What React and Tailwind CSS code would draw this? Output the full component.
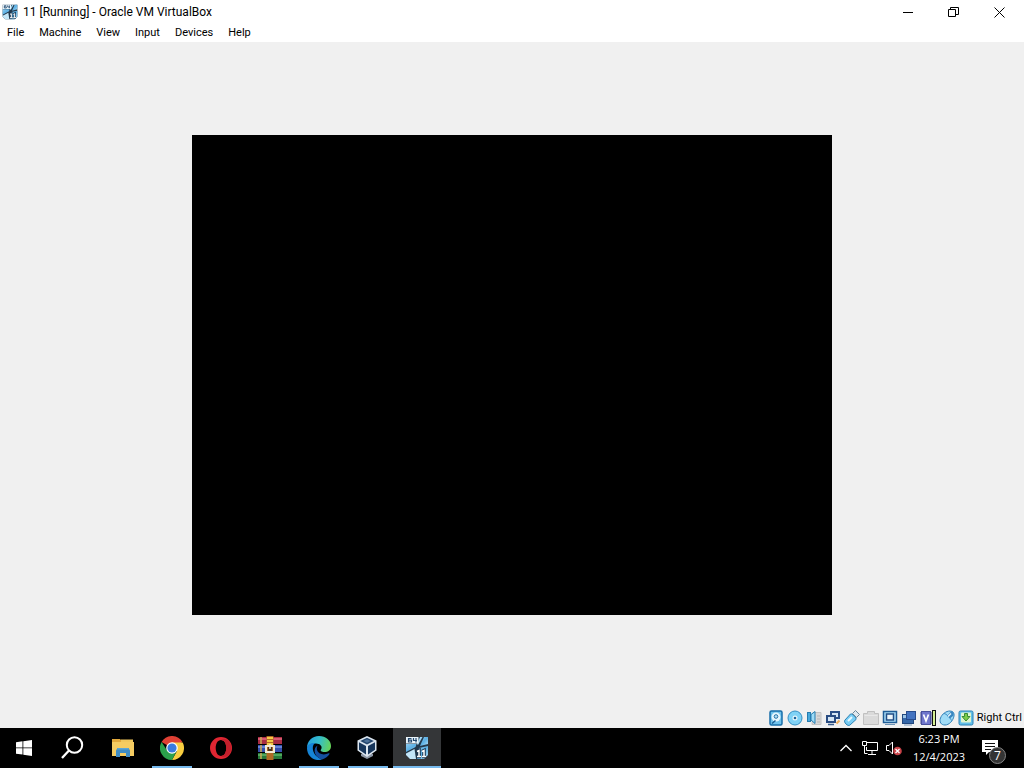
const menus = ["File", "Machine", "View", "Input", "Devices", "Help"];

const VmIcon = ({ className }) => (
  <svg className={className} viewBox="0 0 24 24" aria-hidden="true">
    <defs>
      <linearGradient id="vmBlue" x1="0" y1="0" x2="1" y2="1">
        <stop offset="0" stopColor="#8fcbee" />
        <stop offset="0.5" stopColor="#5cb0e4" />
        <stop offset="1" stopColor="#b4e0f6" />
      </linearGradient>
    </defs>
    <path d="M1 1h22v18l-4 4H5l-4-4z" fill="#22384c" />
    <path d="M1 8h10.500l-1 3L1 16z" fill="url(#vmBlue)" />
    <path d="M15 1h2.500L13 9l-1-1z" fill="#9fd5f2" />
    <path d="M19 1h4v7l-8 2z" fill="url(#vmBlue)" />
    <path d="M1 17.500L9.500 13l1.500 10H5l-4-4z" fill="#c3e6f8" />
    <path d="M14 12l9-2v9l-4 4h-7z" fill="url(#vmBlue)" />
    <rect x="1" y="1" width="12.500" height="6.500" fill="#eaf5fb" />
    <path
      d="M6.500 2.500H3.500v3.500h3V4.200h-3M8.500 2v2.500h3.500M11 2v4.500"
      fill="none"
      stroke="#244a70"
      strokeWidth="1.200"
    />
    <path
      d="M12 15.500l2-1v6M12 20.500h4M17 15.500l2-1v6M17 20.500h4"
      fill="none"
      stroke="#17344f"
      strokeWidth="3.500"
    />
    <path
      d="M12 15.500l2-1v6M12 20.500h4M17 15.500l2-1v6M17 20.500h4"
      fill="none"
      stroke="#fff"
      strokeWidth="1.500"
    />
  </svg>
);

const StartIcon = () => (
  <svg className="w-4 h-4" viewBox="0 0 16 16" fill="#fff" aria-hidden="true">
    <path d="M0 2.200L6.500 1.300V7.500H0zM7.300 1.200L16 0v7.500H7.300zM0 8.300h6.500v6.300L0 13.700zM7.300 8.300H16V16l-8.700-1.300z" />
  </svg>
);

const SearchIcon = () => (
  <svg className="w-6 h-6" viewBox="0 0 24 24" fill="none" stroke="#fff" aria-hidden="true">
    <circle cx="13.500" cy="9" r="7.700" strokeWidth="2" />
    <path d="M8 14.500L1 22" strokeWidth="2.300" />
  </svg>
);

const ExplorerIcon = () => (
  <svg className="w-6 h-6" viewBox="0 0 24 24" aria-hidden="true">
    <path d="M1 3h8l2 2h11v14H1z" fill="#e2a93c" />
    <path d="M10 3.500h12V7H10z" fill="#f0c75d" />
    <path d="M1 6h22v14H1z" fill="#f5cc62" />
    <path d="M5 21v-6.500L6.500 12h11l1.500 2.500V21h-4v-4H9v4z" fill="#3f8cc4" />
    <path d="M6.500 12h11l.500 1.500H6z" fill="#5ba6d8" />
  </svg>
);

const ChromeIcon = () => (
  <svg className="w-6 h-6" viewBox="0 0 24 24" aria-hidden="true">
    <path d="M12 12L1.600 6A12 12 0 0 1 22.400 6z" fill="#df4034" />
    <path d="M12 12V6.500h10.700A12 12 0 0 1 12 24l5-9z" fill="#f8cd40" />
    <path d="M12 12l4.800 2.800L12 24A12 12 0 0 1 1.600 6l5.600 8.800z" fill="#2ba14b" />
    <circle cx="12" cy="12" r="5.800" fill="#fff" />
    <circle cx="12" cy="12" r="4.600" fill="#397be0" />
  </svg>
);

const OperaIcon = () => (
  <svg className="w-6 h-6" viewBox="0 0 24 24" aria-hidden="true">
    <path
      fillRule="evenodd"
      d="M12 1a11 11 0 1 0 0 22a11 11 0 0 0 0-22zM12 4c3.200 0 5.300 3.600 5.300 8s-2.100 8-5.300 8S6.700 16.400 6.700 12S8.800 4 12 4z"
      fill="#e02632"
    />
    <path
      d="M12 4c2-1.500 5-1 7 .500c4.700 4 4.700 11 0 15c-2 1.500-5 2-7 .500c3.200 0 5.300-3.600 5.300-8S15.200 4 12 4z"
      fill="#c4202c"
    />
  </svg>
);

const WinRarIcon = () => (
  <svg className="w-6 h-6" viewBox="0 0 24 24" aria-hidden="true">
    <rect y="1" width="24" height="7" fill="#a92c43" />
    <rect y="2" width="24" height="2" fill="#d65a70" />
    <rect y="9" width="24" height="7" fill="#354fac" />
    <rect y="10" width="24" height="2" fill="#6482d6" />
    <rect y="17" width="24" height="6" fill="#28793a" />
    <rect y="18" width="24" height="2" fill="#50a85c" />
    <path d="M3 1v7M3 9v7M3 17v6" stroke="#c7a855" strokeWidth="1.500" />
    <rect x="8.500" width="7" height="24" fill="#b06a24" />
    <path d="M9 2h6M9 5h6M9 8h6" stroke="#f4ca45" strokeWidth="2" />
    <path d="M8 10h8v6H8z" fill="none" stroke="#f3ead4" strokeWidth="2" />
    <path d="M10 11h4v4h-4z" fill="#49321d" />
    <path d="M12 8v5" stroke="#f3ead4" strokeWidth="1.500" />
  </svg>
);

const EdgeIcon = () => (
  <svg className="w-6 h-6" viewBox="0 0 24 24" aria-hidden="true">
    <defs>
      <linearGradient id="edgeTop" x1="0" y1="0.300" x2="1" y2="0.500">
        <stop offset="0" stopColor="#259fe0" />
        <stop offset="0.500" stopColor="#35bec9" />
        <stop offset="1" stopColor="#65d45b" />
      </linearGradient>
    </defs>
    <path
      d="M0 12C0 5 5 0 12 0s12 4.500 12 10c0 4-3 6-6.500 6c-3 0-4.500-1-3.500-2.500c2-3-1-6-5-6S1 9 0 12z"
      fill="url(#edgeTop)"
    />
    <path
      d="M0 12c.500-4 4.500-5.500 8-5c-2 1.500-2.500 4-2 7c.700 4.500 4.500 7.500 9 9.500C7 26 0 20 0 12z"
      fill="#1684d6"
    />
    <path
      d="M10.500 9.500C6 12 7 19 12 22c1 .700 2 1.300 3 1.500c3.500-1 6-3 7.500-5.500c.300-.700-.200-1-.800-.700c-5.200 2.400-10.700.700-11.700-3.300c-.400-1.700 0-3.300.500-4.500z"
      fill="#1450a0"
    />
  </svg>
);

const BoxIcon = () => (
  <svg className="w-6 h-6" viewBox="0 0 24 24" aria-hidden="true">
    <path d="M5 18l6-2 6 2v2l-6 3-6-3z" fill="#8b96a5" />
    <path d="M11 0l9.500 4.500v10L11 21l-9.500-6.500v-10z" fill="#dce6f0" />
    <path d="M11 1.800L17.800 5 11 8.500 4.200 5z" fill="#24466d" />
    <path d="M3 6.300l7 3.800v8.500l-7-4.800z" fill="#17365b" />
    <path d="M19 6.300l-7 3.800v8.500l7-4.800z" fill="#17365b" />
    <path d="M7.500 5L11 3.300 14.500 5 11 6.800z" fill="#4b7099" />
  </svg>
);

const tasks = [
  { name: "File Explorer", icon: <ExplorerIcon /> },
  { name: "Google Chrome", icon: <ChromeIcon />, open: true },
  { name: "Opera", icon: <OperaIcon /> },
  { name: "WinRAR", icon: <WinRarIcon /> },
  { name: "Microsoft Edge", icon: <EdgeIcon />, open: true },
  { name: "Oracle VM VirtualBox", icon: <BoxIcon />, open: true },
  { name: "Virtual machine", icon: <VmIcon className="w-6 h-6" />, active: true },
];

// Indicators share a 16px drawing box
const indicators = [
  {
    name: "Hard disks",
    icon: (
      <>
        <rect x="2" y="1" width="12" height="14" rx="1.500" fill="#6fc2ec" stroke="#176da9" strokeWidth="1.500" />
        <circle cx="8" cy="7" r="4.500" fill="#e6f6fd" />
        <circle cx="8" cy="6.500" r="1.800" fill="#b5e0f5" stroke="#2671a5" />
        <path d="M4 13.500l3.500-3" stroke="#195d93" strokeWidth="1.500" />
      </>
    ),
  },
  {
    name: "Optical drives",
    icon: (
      <>
        <circle cx="8" cy="8" r="7" fill="#7fd2f6" stroke="#348fc4" />
        <circle cx="8" cy="8" r="2.500" fill="#e9f8fd" />
        <circle cx="8" cy="8" r="1.300" fill="#1c649b" />
      </>
    ),
  },
  {
    name: "Audio",
    icon: (
      <>
        <path d="M7 2.500h8v12H6z" fill="#d8d8d8" stroke="#c2c2c2" />
        <path d="M11 6h3M11 9h3M11 12h3" stroke="#b5b5b5" />
        <rect x="1.500" y="2.500" width="3" height="9" fill="#48a9dc" stroke="#267caf" />
        <path d="M5 4.500l4-3v12L5 10z" fill="#9edcf7" stroke="#267caf" />
      </>
    ),
  },
  {
    name: "Network",
    icon: (
      <>
        <rect x="6" y="2" width="8" height="6" fill="#d5e6f5" stroke="#2b4f87" strokeWidth="2" />
        <rect x="2" y="6" width="8" height="6" fill="#d5e6f5" stroke="#294c82" strokeWidth="2" />
        <path d="M3 14.500h6" stroke="#385d8d" strokeWidth="1.500" />
        <path d="M11.500 13.500l3-3" stroke="#ecad5b" strokeWidth="2" />
      </>
    ),
  },
  {
    name: "USB",
    icon: (
      <>
        <path d="M1 10L6.500 4c1.500-1 6.500 4 5.500 5.500L6 15c-2 2-7-3-5-5z" fill="#79cdf4" stroke="#2d83b5" />
        <path d="M8.500 3.500l3-3L15.500 4.500l-3 3z" fill="#dfe8ee" stroke="#6d8799" />
        <path d="M4 11l4-4" stroke="#e9faff" strokeWidth="2" />
      </>
    ),
  },
  {
    name: "Shared folders",
    icon: (
      <>
        <path d="M0.500 3.500h4v-2h7v2h4v11h-15z" fill="#dadada" stroke="#c0c0c0" />
        <path d="M1.500 5.500h13" stroke="#e8e8e8" />
      </>
    ),
  },
  {
    name: "Display",
    icon: (
      <>
        <rect x="1.500" y="1.500" width="13" height="11" fill="#aadcf6" stroke="#1f5c96" strokeWidth="1.500" />
        <rect x="4.500" y="4" width="7" height="6" fill="#eef6fa" stroke="#1f4c86" strokeWidth="1.500" />
        <path d="M3 14.500h10" stroke="#6e94b6" />
      </>
    ),
  },
  {
    name: "Recording",
    icon: (
      <>
        <rect x="1.500" y="4.500" width="11" height="9" fill="#9ec6e8" stroke="#22487e" />
        <path d="M2 8h10v5H2z" fill="#3567a8" />
        <rect x="5.500" y="1.500" width="9" height="8" fill="#4272c0" stroke="#274b8c" />
        <path d="M3 15h8" stroke="#7f9dc0" />
      </>
    ),
  },
  {
    name: "Features",
    icon: (
      <>
        <path d="M0 3h12M0 5h12M0 7h12M0 9h12M0 11h12M0 13h12" stroke="#3c4290" strokeWidth="1" />
        <rect x="1.500" y="1.500" width="9" height="13" fill="#6f76cc" stroke="#4a519e" />
        <path d="M3.500 4.500L6 11l2.500-6.500" fill="none" stroke="#fff" strokeWidth="1.700" />
        <rect x="12.500" y="0.500" width="3" height="15" fill="#d4ef94" stroke="#111" />
      </>
    ),
  },
  {
    name: "Mouse integration",
    icon: (
      <>
        <path
          d="M1.500 8C3 4 7 1 11 1c3 0 4.500 2 4 5c-1 5-5 9-9 9C2 15 0 12 1.500 8z"
          fill="#a0dcf7"
          stroke="#2f80b8"
        />
        <path d="M8 6l4-4.500c2 0 3 1.500 2.500 4L11 8.500z" fill="#3a86c0" />
        <path d="M5 3.500c2 0 6 4 7.500 7" stroke="#3a86c0" />
        <path d="M9 6.500L12 3.500" stroke="#e6f6fd" strokeWidth="1.500" />
      </>
    ),
  },
  {
    name: "Keyboard",
    icon: (
      <>
        <rect x="1" y="1" width="14" height="14" rx="1.500" fill="#64c0ea" stroke="#2b80b6" />
        <rect x="3" y="2.500" width="10" height="10" rx="1" fill="#e0f5cf" />
        <path d="M6.500 3.500h3v3H12L8 11 4 6.500h2.500z" fill="#7ccb48" stroke="#388c31" />
      </>
    ),
  },
];

const TitleBar = () => (
  <header className="flex h-6 items-center justify-between">
    <div className="flex items-center gap-[5px] pl-[2px]">
      <VmIcon className="w-4 h-4" />
      <h1 className="font-[Roboto] text-[12px] leading-4">
        11 [Running] - Oracle VM VirtualBox
      </h1>
    </div>
    <div className="flex pr-px">
      <button type="button" aria-label="Minimize" className="flex h-5 w-[45px] items-center justify-center">
        <svg className="w-[11px] h-[11px]" viewBox="0 0 11 11" stroke="#000">
          <path d="M0 5.500h10" />
        </svg>
      </button>
      <button type="button" aria-label="Restore" className="flex h-5 w-[45px] items-center justify-center">
        <svg className="w-[11px] h-[11px]" viewBox="0 0 11 11" fill="none" stroke="#000">
          <path d="M0.500 2.500h7v7h-7zM2.500 2.500v-2h8v7h-3" />
        </svg>
      </button>
      <button type="button" aria-label="Close" className="flex h-5 w-[47px] items-center justify-center">
        <svg className="w-[11px] h-[11px]" viewBox="0 0 11 11" stroke="#000">
          <path d="M0.500 0.500l10 10M10.500 0.500l-10 10" />
        </svg>
      </button>
    </div>
  </header>
);

const StatusBar = () => (
  <footer className="flex h-5 items-center justify-end gap-[3px] pr-[2px]">
    {indicators.map(({ name, icon }) => (
      <button key={name} type="button" aria-label={name}>
        <svg className="block w-4 h-4" viewBox="0 0 16 16" fill="none">
          {icon}
        </svg>
      </button>
    ))}
    <span className="font-[Roboto] text-[11px] leading-4">Right Ctrl</span>
  </footer>
);

const Taskbar = () => (
  <footer className="flex h-10 items-stretch justify-between bg-black text-white">
    <div className="flex gap-px">
      <button type="button" aria-label="Start" className="flex w-12 items-center justify-center">
        <StartIcon />
      </button>
      <button type="button" aria-label="Search" className="flex w-12 items-center justify-center">
        <SearchIcon />
      </button>
      <div className="flex gap-px pl-px">
        {tasks.map(({ name, icon, open, active }) => (
          <button
            key={name}
            type="button"
            aria-label={name}
            className={`flex w-12 flex-col items-center ${active ? "bg-[#343638]" : ""}`}
          >
            <span className="flex grow items-center pt-[2px]">{icon}</span>
            <span
              className={`h-[2px] ${active ? "w-full bg-[#76b9ed]" : "w-10"} ${
                open ? "bg-[#76b9ed]" : ""
              }`}
            />
          </button>
        ))}
      </div>
    </div>
    <div className="flex items-center pr-[18px]">
      <button type="button" aria-label="Show hidden icons" className="flex w-6 justify-center">
        <svg className="w-3 h-3" viewBox="0 0 12 12" fill="none" stroke="#fff" strokeWidth="1.300">
          <path d="M0.500 9L6 3.500 11.500 9" />
        </svg>
      </button>
      <button type="button" aria-label="Network" className="flex w-6 justify-center">
        <svg className="w-4 h-4" viewBox="0 0 16 16" fill="none" stroke="#fff">
          <path d="M5 2.500h10.500v8H4.500V7M10 11v3M6 14.500h8" />
          <path d="M0.500 1.500h4v4h-4zM2.500 5.500v8h3" />
        </svg>
      </button>
      <button type="button" aria-label="Volume" className="flex w-6 justify-center">
        <svg className="w-4 h-4" viewBox="0 0 16 16" fill="none">
          <path d="M0.500 5.500H3L6.500 2v12L3 10.500H0.500z" stroke="#fff" />
          <circle cx="11.500" cy="11" r="4.300" fill="#c94248" />
          <path d="M9.500 9l4 4M13.500 9l-4 4" stroke="#fff" strokeWidth="1.200" />
        </svg>
      </button>
      <div className="w-[66px] text-center text-[11px] leading-[18px]">
        <p>6:23 PM</p>
        <p>12/4/2023</p>
      </div>
      <button type="button" aria-label="Notifications" className="relative ml-[10px] w-6 h-6">
        <svg className="w-4 h-4" viewBox="0 0 16 16">
          <path d="M0 0h16v12H7l-3 3v-3H0z" fill="#fff" />
          <path d="M3 3.500h10M3 6.500h10M3 9.500h6" stroke="#111" />
        </svg>
        <span className="absolute -bottom-1 right-0 flex h-[17px] w-[17px] items-center justify-center rounded-full border border-[#858585] bg-[#343434] text-[12px] leading-4">
          7
        </span>
      </button>
    </div>
  </footer>
);

const App = () => {
  return (
    <div className="flex min-h-screen flex-col bg-[#f0f0f0] font-['Open_Sans',sans-serif] text-black">
      <div className="bg-white">
        <TitleBar />
        <nav className="flex h-[18px] items-center gap-[15px] px-[7px] font-[Roboto] text-[11px] leading-4">
          {menus.map((menu) => (
            <button key={menu} type="button">
              {menu}
            </button>
          ))}
        </nav>
      </div>
      <main className="flex grow items-center justify-center">
        <div className="aspect-4/3 w-5/8 bg-black" />
      </main>
      <StatusBar />
      <Taskbar />
    </div>
  );
};

export default App;
